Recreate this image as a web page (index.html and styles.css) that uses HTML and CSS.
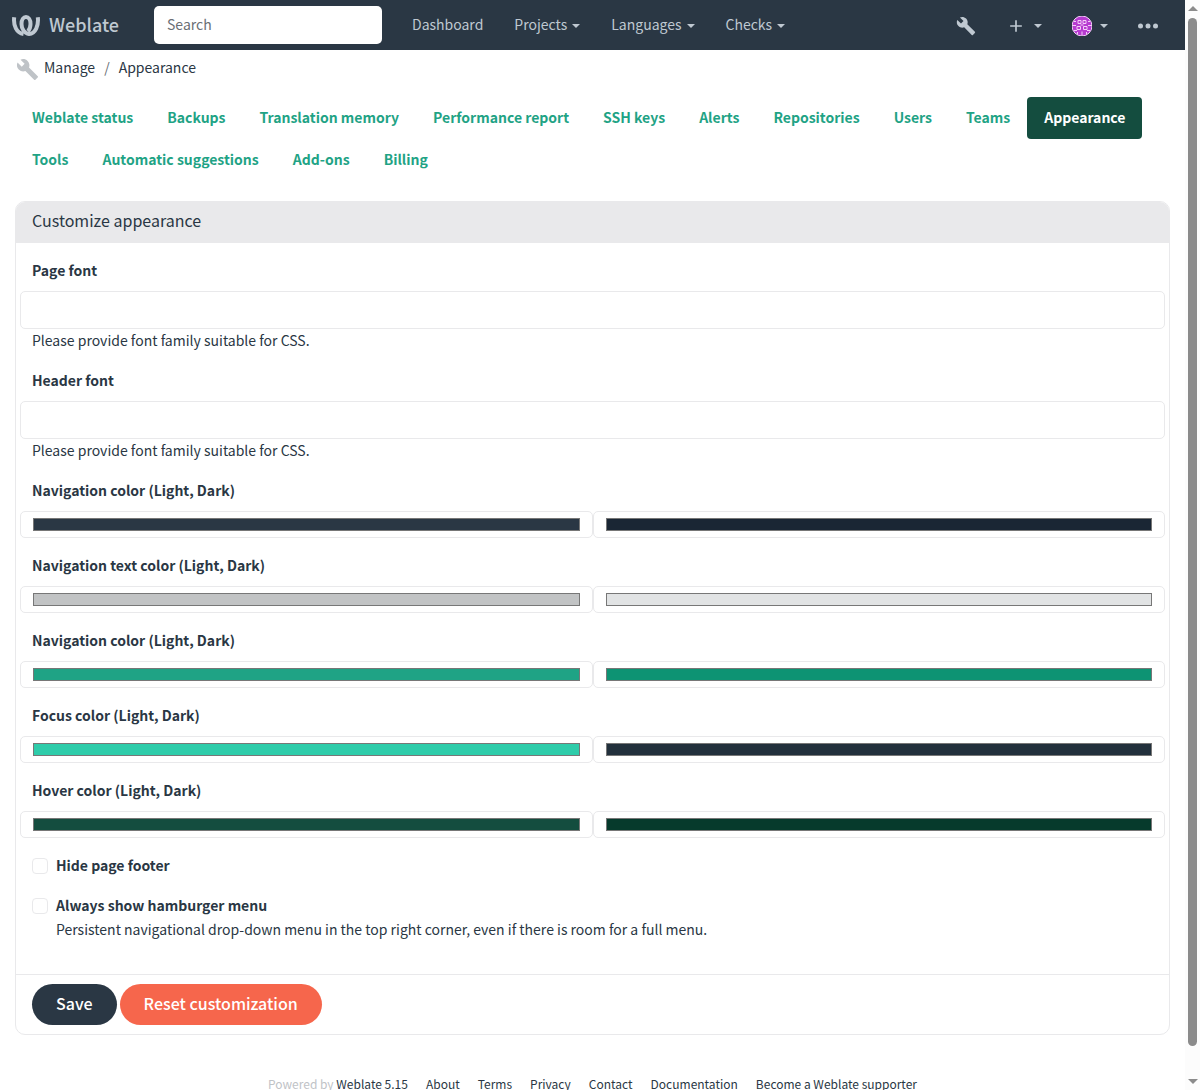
FILE: index.html
```html
<!DOCTYPE html>
<html lang="en">
<head>
<meta charset="utf-8">
<title>Appearance @ Weblate</title>
<link rel="stylesheet" href="styles.css">
</head>
<body>
<div class="page">
  <header class="navbar">
    <a class="brand" href="#">
      <svg class="brand-logo" viewBox="0 0 28 21" aria-hidden="true">
        <path d="M2.200 2.200C1.200 10.500 4.500 18 11.500 19" />
        <path d="M25.800 2.200C26.800 10.500 23.500 18.500 17 19C12.500 18.500 9.500 14 9.500 9C9.500 4.500 11.500 2 14 2C16.500 2 18.500 4.500 18.500 9C18.500 12 17.500 14.500 16 16.200" />
      </svg>
      <span>Weblate</span>
    </a>
    <input class="search" type="search" placeholder="Search" aria-label="Search">
    <nav class="menu">
      <a href="#">Dashboard</a>
      <a href="#">Projects<i class="caret"></i></a>
      <a href="#">Languages<i class="caret"></i></a>
      <a href="#">Checks<i class="caret"></i></a>
    </nav>
    <nav class="tools">
      <a href="#" aria-label="Manage"><svg class="icon" viewBox="0 0 24 24"><path d="M22.700 19l-9.100-9.100c.9-2.300.4-5-1.500-6.900-2-2-5-2.400-7.400-1.300L9 6 6 9 1.600 4.700C.4 7.100.9 10.100 2.900 12.100c1.900 1.900 4.600 2.400 6.900 1.500l9.100 9.100c.4.4 1 .4 1.400 0l2.300-2.300c.5-.4.5-1.100.1-1.400z"/></svg></a>
      <a class="with-caret" href="#" aria-label="Add"><svg class="icon" viewBox="0 0 24 24"><path d="M19 13h-6v6h-2v-6H5v-2h6V5h2v6h6z"/></svg><i class="caret"></i></a>
      <a class="with-caret" href="#" aria-label="User profile">
        <svg class="avatar" viewBox="0 0 20 20"><circle cx="10" cy="10" r="10"/><path d="M6 4.500h3v3H6zM11 4.500h3v3h-3zM5 10.500h3.500v3H5zM11.500 10.500H15v3h-3.500zM8.500 9h3M2 5.500h2M16 5.500h2M0 9.500h4M16 9.500h4M2 14.500h3M15 14.500h3M5.500 16v2.500M10 15.500v4M14.500 16v2.500"/></svg><i class="caret"></i></a>
      <a href="#" aria-label="More"><svg class="icon" viewBox="0 0 20 20"><circle cx="2.500" cy="10" r="2.500"/><circle cx="10" cy="10" r="2.500"/><circle cx="17.500" cy="10" r="2.500"/></svg></a>
    </nav>
  </header>

  <nav class="breadcrumb" aria-label="Breadcrumb">
    <svg class="crumb-icon" viewBox="0 0 24 24" aria-hidden="true"><path d="M22.700 19l-9.100-9.100c.9-2.300.4-5-1.500-6.900-2-2-5-2.400-7.400-1.300L9 6 6 9 1.600 4.700C.4 7.100.9 10.100 2.900 12.100c1.900 1.900 4.600 2.400 6.900 1.500l9.100 9.100c.4.4 1 .4 1.400 0l2.300-2.300c.5-.4.5-1.100.1-1.400z"/></svg>
    <a href="#">Manage</a><span class="slash">/</span><a href="#">Appearance</a>
  </nav>

  <main>
    <nav class="pills">
      <a href="#">Weblate status</a>
      <a href="#">Backups</a>
      <a href="#">Translation memory</a>
      <a href="#">Performance report</a>
      <a href="#">SSH keys</a>
      <a href="#">Alerts</a>
      <a href="#">Repositories</a>
      <a href="#">Users</a>
      <a href="#">Teams</a>
      <a class="active" href="#" aria-current="page">Appearance</a>
      <a href="#">Tools</a>
      <a href="#">Automatic suggestions</a>
      <a href="#">Add-ons</a>
      <a href="#">Billing</a>
    </nav>

    <form class="card">
      <h1>Customize appearance</h1>
      <div class="card-body">
        <div class="field">
          <label for="page-font">Page font</label>
          <input class="text" id="page-font" type="text">
          <p class="hint">Please provide font family suitable for CSS.</p>
        </div>
        <div class="field">
          <label for="header-font">Header font</label>
          <input class="text" id="header-font" type="text">
          <p class="hint">Please provide font family suitable for CSS.</p>
        </div>
        <div class="field">
          <label for="nav-light">Navigation color (Light, Dark)</label>
          <div class="pair"><input id="nav-light" type="color" value="#2a3744"><input type="color" value="#1a2634" aria-label="Navigation color, dark"></div>
        </div>
        <div class="field">
          <label for="text-light">Navigation text color (Light, Dark)</label>
          <div class="pair"><input id="text-light" type="color" value="#c1c3c4"><input type="color" value="#e1e3e4" aria-label="Navigation text color, dark"></div>
        </div>
        <div class="field">
          <label for="link-light">Navigation color (Light, Dark)</label>
          <div class="pair"><input id="link-light" type="color" value="#1fa385"><input type="color" value="#0d9373" aria-label="Link color, dark"></div>
        </div>
        <div class="field">
          <label for="focus-light">Focus color (Light, Dark)</label>
          <div class="pair"><input id="focus-light" type="color" value="#2eccaa"><input type="color" value="#22303c" aria-label="Focus color, dark"></div>
        </div>
        <div class="field">
          <label for="hover-light">Hover color (Light, Dark)</label>
          <div class="pair"><input id="hover-light" type="color" value="#144d3f"><input type="color" value="#063a2c" aria-label="Hover color, dark"></div>
        </div>
        <div class="check">
          <input id="hide-footer" type="checkbox">
          <label for="hide-footer">Hide page footer</label>
        </div>
        <div class="check">
          <input id="hamburger" type="checkbox">
          <div>
            <label for="hamburger">Always show hamburger menu</label>
            <p>Persistent navigational drop-down menu in the top right corner, even if there is room for a full menu.</p>
          </div>
        </div>
      </div>
      <div class="card-footer">
        <button class="save" type="submit">Save</button>
        <button class="reset" type="button">Reset customization</button>
      </div>
    </form>
  </main>

  <footer class="footer">
    <span>Powered by <a href="#">Weblate 5.15</a></span>
    <a href="#">About</a>
    <a href="#">Terms</a>
    <a href="#">Privacy</a>
    <a href="#">Contact</a>
    <a href="#">Documentation</a>
    <a href="#">Become a Weblate supporter</a>
  </footer>
</div>
<div class="scrollbar" aria-hidden="true">
  <i class="arrow-up"></i>
  <i class="thumb"></i>
  <i class="arrow-down"></i>
</div>
</body>
</html>
```
FILE: styles.css
```css
* { box-sizing: border-box; }

body {
  margin: 0;
  height: 100vh;
  display: flex;
  overflow: hidden;
  background: #fff;
  color: #2a3744;
  font: 14px/22px "Noto Sans CJK SC", "Noto Sans", sans-serif;
}

a { color: inherit; text-decoration: none; }
p { margin: 0; padding-bottom: 2px; }
button, input { font: inherit; color: inherit; }

.page {
  flex: 1;
  min-width: 0;
  overflow-x: hidden;
  overflow-y: auto;
  scrollbar-width: none;
}

/* Top bar */
.navbar {
  display: flex;
  align-items: center;
  height: 50px;
  padding: 0 27px 0 12px;
  background: #2a3744;
  color: #bfc8d1;
}

.brand {
  display: flex;
  align-items: center;
  gap: 9px;
  width: 142px;
  font-size: 18px;
  font-weight: 500;
}
.brand span { padding-bottom: 3px; }

.brand-logo {
  width: 28px;
  height: 21px;
  fill: none;
  stroke: currentColor;
  stroke-width: 4;
}

.search {
  width: 228px;
  height: 38px;
  padding: 0 13px 2px;
  border: 0;
  border-radius: 5px;
  background: #fff;
}
.search::placeholder { color: #6a6f75; opacity: 1; }

.menu { display: flex; gap: 31px; margin-left: 30px; padding-bottom: 2px; }
.menu a, .tools a { display: flex; align-items: center; }
.menu .caret { margin: 3px 0 0 5px; }

.caret {
  border: 4px solid transparent;
  border-top-color: currentColor;
  border-bottom-width: 0;
}

.tools { display: flex; align-items: center; margin-left: auto; gap: 30px; padding-top: 2px; }
.tools .with-caret { gap: 8px; }
.icon { width: 20px; height: 20px; fill: currentColor; }
.avatar { width: 20px; height: 20px; fill: #b63bd0; stroke: #f3cdf8; stroke-width: 1; }

/* Breadcrumb */
.breadcrumb {
  display: flex;
  height: 47px;
  padding: 6px 16px;
}
.crumb-icon { width: 23px; height: 23px; margin: 2px 5px 0 0; fill: #bfc3c7; }
.slash { margin: 0 9px; color: #6a6f75; }

main { padding: 0 15px; }

/* Section tabs */
.pills { display: flex; flex-wrap: wrap; margin-bottom: 20px; }
.pills a {
  padding: 9px 17px 11px;
  border-radius: 4px;
  color: #1fa385;
  font-weight: 700;
}
.pills .active { background: #144d3f; color: #fff; }

/* Form card */
.card { border: 1px solid #e9e9eb; border-radius: 10px; overflow: hidden; }

.card h1 {
  margin: 0;
  padding: 7px 16px 12px;
  background: #e9e9eb;
  font-size: 16px;
  font-weight: 400;
}

.card-body { padding: 16px 4px 32px; }
.field { margin-bottom: 16px; }
.field label { display: block; margin: 0 12px 10px; }
label { font-weight: 700; }
.hint { margin: 0 12px; }

.text {
  display: block;
  width: 100%;
  height: 38px;
  padding: 0 12px;
  border: 1px solid #e9e9eb;
  border-radius: 5px;
  background: #fff;
}

.pair { display: grid; grid-template-columns: 1fr 1fr; }
.pair input {
  appearance: none;
  width: 100%;
  height: 27px;
  padding: 6px 12px;
  border: 1px solid #e9e9eb;
  border-radius: 5px;
  background: #fff;
}
.pair input::-webkit-color-swatch-wrapper { padding: 0; }
.pair input::-webkit-color-swatch { border: 1px solid #777; }

.check { display: flex; gap: 8px; margin: 0 12px 16px; }
.check input {
  appearance: none;
  width: 16px;
  height: 16px;
  margin: 4px 0;
  border: 1px solid #e9e9eb;
  border-radius: 4px;
}
.check label { display: block; padding-bottom: 2px; }
.check div { flex: 1; }
.check:last-child { margin-bottom: 0; }

.card-footer {
  display: flex;
  gap: 3px;
  padding: 9px 16px;
  border-top: 1px solid #e9e9eb;
}
.card-footer button {
  height: 41px;
  padding: 0 24px 3px;
  border: 0;
  border-radius: 21px;
  color: #fff;
  font-size: 16px;
  font-weight: 500;
}
.card-footer .save { background: #2a3744; }
.card-footer .reset { background: #f6664c; }

.footer {
  display: flex;
  justify-content: center;
  gap: 18px;
  padding: 38px 16px 12px;
  font-size: 12px;
}
.footer span { color: #bfc3c7; }
.footer span a { color: #2a3744; }

/* Scroll track */
.scrollbar {
  display: flex;
  flex-direction: column;
  align-items: center;
  gap: 7px;
  width: 15px;
  padding: 6px 0;
  background: #fcfcfc;
  color: #8b8b8b;
}
.thumb { flex: 1; width: 9px; margin-bottom: 26px; border-radius: 5px; background: currentColor; }
.arrow-up { border: 5px solid transparent; border-top-width: 0; border-bottom-color: currentColor; }
.arrow-down { border: 5px solid transparent; border-bottom-width: 0; border-top-color: currentColor; }
```
